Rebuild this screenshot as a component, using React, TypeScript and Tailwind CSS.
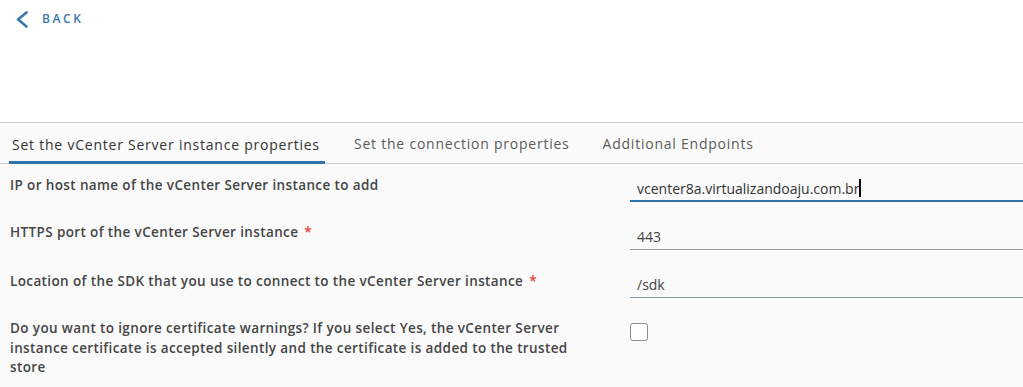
import React from "react";

const font = { fontFamily: '"Open Sans", "Liberation Sans", sans-serif' };

function Row({ label, required, children }: { label: React.ReactNode; required?: boolean; children: React.ReactNode }) {
  return (
    <div className="flex">
      <div className="w-[630px] shrink-0 pl-[10px] pr-[55px] text-[13.5px] tracking-[0.028em] font-semibold text-[#454545] leading-[19.5px]">
        {label}
        {required && <span className="ml-[6px] text-[#e0403a]">*</span>}
      </div>
      <div className="flex-1">{children}</div>
    </div>
  );
}

export default function App() {
  return (
    <div className="w-[1023px] h-[387px] overflow-hidden bg-[#fafafa]" style={font}>
      <div className="h-[123px] bg-white border-b border-[#cccccc]">
        <div className="flex items-center pl-[15px] pt-[10px] gap-[13px] text-[#3a77ac]">
          <svg width="14" height="17" viewBox="0 0 14 17" fill="none">
            <path d="M11.5 1.5 L3 8.5 L11.5 15.5" stroke="#3a77ac" strokeWidth="2.6" strokeLinecap="round" strokeLinejoin="round" />
          </svg>
          <span className="text-[12px] font-semibold tracking-[0.22em]">BACK</span>
        </div>
      </div>
      <div className="flex items-end h-[41px] border-b border-[#cccccc] pl-[9px]">
        <div className="pl-[3px] h-[40px] flex items-center border-b-[3px] border-[#2f73a8] mb-[-1px] text-[14px] tracking-[0.055em] text-[#333] w-[316px]">
          <span className="pt-[3px]">Set the vCenter Server instance properties</span>
        </div>
        <div className="pl-[29px] h-[40px] flex items-center text-[14px] tracking-[0.055em] text-[#5b5b5b]">
          <span className="pt-[1px]">Set the connection properties</span>
        </div>
        <div className="pl-[33px] h-[40px] flex items-center text-[14px] tracking-[0.055em] text-[#5b5b5b]">
          <span className="pt-[1px]">Additional Endpoints</span>
        </div>
      </div>
      <div className="flex flex-col pt-[12px]">
        <div className="h-[47px]">
          <Row label="IP or host name of the vCenter Server instance to add">
            <div className="h-[26px] border-b-2 border-[#2f73a8] pl-[7px] text-[14px] text-[#333] flex items-center">
              vcenter8a.virtualizandoaju.com.br<span className="inline-block w-[2px] h-[18px] bg-black"></span>
            </div>
          </Row>
        </div>
        <div className="h-[49px]">
          <Row label="HTTPS port of the vCenter Server instance" required>
            <div className="h-[27px] border-b border-[#9a9a9a] pl-[7px] text-[14px] text-[#454545] flex items-end pb-[2px]">443</div>
          </Row>
        </div>
        <div className="h-[47px]">
          <Row label="Location of the SDK that you use to connect to the vCenter Server instance" required>
            <div className="h-[26px] border-b border-[#8a9aa6] pl-[7px] text-[14px] text-[#454545] flex items-end pb-[2px]">/sdk</div>
          </Row>
        </div>
        <Row label="Do you want to ignore certificate warnings? If you select Yes, the vCenter Server instance certificate is accepted silently and the certificate is added to the trusted store">
          <div className="pt-[4px]">
            <div className="w-[18px] h-[18px] border border-[#8c8c8c] rounded-[3px] bg-white"></div>
          </div>
        </Row>
      </div>
    </div>
  );
}
